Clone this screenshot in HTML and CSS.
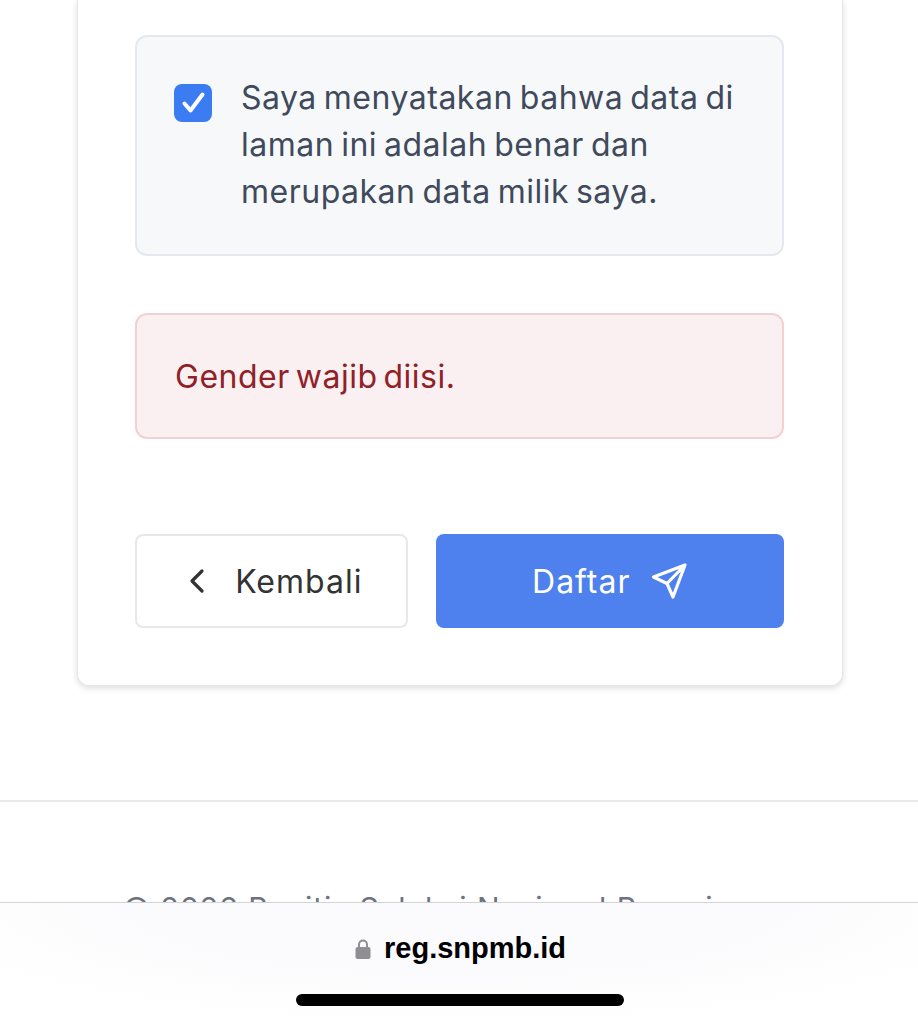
FILE: index.html
```html
<!DOCTYPE html>
<html lang="id">
<head>
<meta charset="utf-8">
<title>Pendaftaran</title>
<link rel="stylesheet" href="styles.css">
</head>
<body>
<div class="page">
  <main class="card">
    <label class="consent">
      <span class="checkbox">
        <svg viewBox="0 0 38 38" width="38" height="38"><path d="M10.500 19.500l6 7L28.500 10.500" fill="none" stroke="#fff" stroke-width="4" stroke-linecap="round" stroke-linejoin="round"/></svg>
      </span>
      <span class="consent-text">Saya menyatakan bahwa data di laman ini adalah benar dan merupakan data milik saya.</span>
    </label>
    <div class="alert">Gender wajib diisi.</div>
    <div class="actions">
      <button class="btn btn-back">
        <svg viewBox="0 0 16 26" width="16" height="26"><path d="M13 3L3 13l10 10" fill="none" stroke="#333" stroke-width="3.200" stroke-linecap="round" stroke-linejoin="round"/></svg>
        <span>Kembali</span>
      </button>
      <button class="btn btn-submit">
        <span>Daftar</span>
        <svg viewBox="0 0 38 38" width="38" height="38"><path d="M35 3L3.500 15l13.500 6.500L23 35 35 3zM35 3L17 21.500" fill="none" stroke="#fff" stroke-width="3.200" stroke-linecap="round" stroke-linejoin="round"/></svg>
      </button>
    </div>
  </main>
  <footer class="footer">© 2026 Panitia Seleksi Nasional Penerimaan</footer>
</div>
<div class="browser-bar">
  <div class="url">
    <svg viewBox="0 0 16 22" width="16" height="22"><path d="M4 10V6.500a4 4 0 0 1 8 0V10" fill="none" stroke="#8e8e93" stroke-width="2"/><rect x="0.500" y="9" width="15" height="12" rx="2" fill="#8e8e93"/></svg>
    <span>reg.snpmb.id</span>
  </div>
  <div class="home-indicator"></div>
</div>
</body>
</html>
```
FILE: styles.css
```css
* { box-sizing: border-box; }
html, body { margin: 0; height: 1024px; overflow: hidden; background: #fff; }
body { font-family: Inter, "Liberation Sans", sans-serif; position: relative; }
.page { display: flex; flex-direction: column; align-items: stretch; height: 1024px; overflow: hidden; }
.card {
  flex: none;
  margin: 0 75px 0 77px;
  height: 686px;
  padding: 35px 58px 0 57px;
  background: #fff;
  border: 1px solid #e6e7eb;
  border-top: 0;
  border-radius: 0 0 12px 12px;
  box-shadow: 0 2px 6px rgba(0,0,0,.14);
  display: flex;
  flex-direction: column;
}
.consent {
  height: 221px;
  padding: 39px 36px 0 37px;
  display: flex;
  gap: 29px;
  align-items: flex-start;
  background: #f7f8fa;
  border: 2px solid #e6e8f0;
  border-radius: 12px;
}
.checkbox {
  flex: none;
  width: 38px;
  height: 38px;
  margin-top: 8px;
  background: #3b7cf2;
  border-radius: 8px;
}
.checkbox svg { display: block; }
.consent-text {
  font-size: 32px;
  line-height: 47px;
  letter-spacing: 0.5px;
  word-spacing: -2.500px;
  color: #3f4a5c;
  margin-top: -2px;
}
.alert {
  margin-top: 57px;
  height: 126px;
  padding: 0 38px;
  display: flex;
  align-items: center;
  background: #fbf0f1;
  border: 2px solid #f3d0d2;
  border-radius: 12px;
  font-size: 32px;
  letter-spacing: 0.5px;
  word-spacing: -3.500px;
  color: #8f2127;
}
.actions { margin-top: 95px; display: flex; gap: 28px; }
.btn {
  height: 94px;
  border-radius: 8px;
  font-family: inherit;
  font-size: 32px;
  letter-spacing: 1px;
  display: flex;
  align-items: center;
  justify-content: center;
}
.btn-back {
  width: 273px;
  gap: 30px;
  padding: 0 0 0 9px;
  background: #fff;
  border: 2px solid #e7e8ec;
  color: #333;
}
.btn-submit {
  width: 349px;
  gap: 19px;
  background: #4e81ee;
  border: 0;
  color: #fff;
}
.footer {
  flex: none;
  margin-top: 114px;
  height: 223px;
  padding-top: 88px;
  border-top: 2px solid #e8e9ed;
  text-align: center;
  font-size: 30px;
  letter-spacing: 1px;
  color: #6b7280;
  white-space: nowrap;
}
.browser-bar {
  position: absolute;
  left: 0;
  right: 0;
  top: 902px;
  height: 122px;
  background: radial-gradient(ellipse 62% 100% at 50% 0, #fbfbfd 55%, #fff 100%);
  border-top: 1px solid #d4d4d6;
}
.url {
  position: absolute;
  top: 29px;
  left: 355px;
  display: flex;
  align-items: center;
  gap: 13px;
  font-family: "Liberation Sans", sans-serif;
  font-weight: 700;
  font-size: 29px;
  color: #000;
}
.home-indicator {
  position: absolute;
  top: 91px;
  left: 296px;
  width: 328px;
  height: 12px;
  border-radius: 6px;
  background: #000;
}
```
